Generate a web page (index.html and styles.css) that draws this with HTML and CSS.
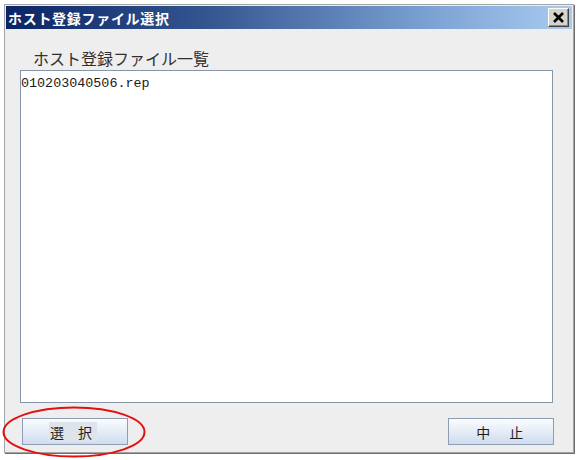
FILE: index.html
```html
<!DOCTYPE html>
<html lang="ja">
<head>
<meta charset="utf-8">
<title>ホスト登録ファイル選択</title>
<link rel="stylesheet" href="styles.css">
</head>
<body>
<div class="window">
  <div class="titlebar">
    <span class="title">ホスト登録ファイル選択</span>
    <span class="close">
      <svg width="13" height="11" viewBox="0 0 13 11"><path d="M2 1 L11 10 M11 1 L2 10" stroke="#000" stroke-width="2.6"/></svg>
    </span>
  </div>
  <div class="content">
    <div class="heading">ホスト登録ファイル一覧</div>
    <div class="list">
      <div class="item">010203040506.rep</div>
    </div>
    <div class="buttons">
      <button class="btn"><span class="focus">選　択</span></button>
      <button class="btn"><span class="cancel-label">中　止</span></button>
    </div>
  </div>
</div>
<svg class="mark" width="150" height="56" viewBox="0 0 150 56"><ellipse cx="73" cy="27" rx="70.5" ry="24.5" fill="none" stroke="#e31010" stroke-width="2"/></svg>
</body>
</html>
```
FILE: styles.css
```css
html, body {
  margin: 0;
  padding: 0;
  background: #ffffff;
  font-family: "Noto Sans CJK JP", "Noto Sans", sans-serif;
}
body {
  position: relative;
  width: 580px;
  height: 460px;
  overflow: hidden;
}
.window {
  margin: 4px 0 0 4px;
  width: 570px;
  height: 449px;
  border: 1px solid #a4a4a4;
  padding: 1px;
  box-sizing: border-box;
  background: #eeeeee;
  display: flex;
  flex-direction: column;
  box-shadow: 1px 1px 0 #6e6e6e;
}
.titlebar {
  height: 23px;
  flex: none;
  background: linear-gradient(to right, #0a2466 0%, #33558f 35%, #7ca2d4 75%, #a9cbef 100%);
  display: flex;
  align-items: center;
  justify-content: space-between;
  padding: 0 3px 0 2px;
}
.title {
  color: #ffffff;
  font-weight: bold;
  font-size: 14px;
  letter-spacing: 0.7px;
  line-height: 20px;
}
.close {
  width: 21px;
  height: 19px;
  box-sizing: border-box;
  background: #d6d3cc;
  border: 1px solid;
  border-color: #ffffff #404040 #404040 #ffffff;
  box-shadow: inset -1px -1px 0 #8a8a8a;
  display: flex;
  align-items: center;
  justify-content: center;
}
.content {
  flex: 1;
  display: flex;
  flex-direction: column;
  padding: 19px 19px 5px 14px;
}
.heading {
  font-size: 16px;
  line-height: 21px;
  color: #303030;
  padding-left: 13px;
  margin-bottom: 1px;
}
.list {
  height: 333px;
  background: #ffffff;
  border: 1px solid #8796a8;
  box-sizing: border-box;
  padding: 6px 0 0 0;
}
.item {
  font-family: "Liberation Mono", "DejaVu Sans Mono", monospace;
  font-size: 13.4px;
  line-height: 14px;
  color: #1a1a1a;
}
.buttons {
  display: flex;
  justify-content: space-between;
  margin-top: 15px;
  padding-left: 2px;
  margin-right: -1px;
}
.btn {
  width: 106px;
  height: 27px;
  box-sizing: border-box;
  border: 1px solid #8c9db4;
  background: linear-gradient(#fbfcfe 0%, #e7eef7 45%, #cfdcee 100%);
  font-family: "Noto Sans CJK JP", sans-serif;
  font-size: 14px;
  line-height: 20px;
  color: #1e1e1e;
  padding: 0;
  display: flex;
  align-items: center;
  justify-content: center;
}
.focus {
  background: #dfe4ea;
  padding: 0 5px 0 1px;
  margin-left: -4px;
}
.cancel-label {
  letter-spacing: 2.5px;
}
.mark {
  position: absolute;
  left: 1px;
  top: 405px;
}
```
